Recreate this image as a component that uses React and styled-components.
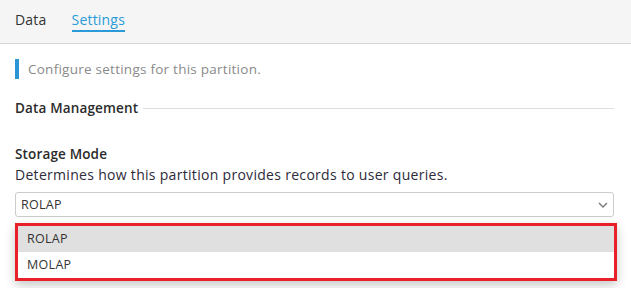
import React from 'react';
import styled, { createGlobalStyle } from 'styled-components';

const GlobalStyle = createGlobalStyle`
  html, body {
    margin: 0;
    padding: 0;
    background: #ffffff;
  }
  body {
    font-family: "Open Sans", "Liberation Sans", sans-serif;
    color: #222;
  }
`;

const Page = styled.div`
  width: 631px;
  height: 288px;
  overflow: hidden;
  background: #fff;
`;

const TabBar = styled.div`
  height: 43px;
  background: #f5f5f5;
  border-bottom: 1px solid #d6d6d6;
  display: flex;
  align-items: flex-start;
  gap: 25px;
  padding-left: 15px;
  box-sizing: content-box;
`;

const Tab = styled.div`
  font-size: 14px;
  letter-spacing: 0.2px;
  line-height: 18px;
  padding-top: 11px;
  padding-bottom: 1px;
  color: ${(p) => (p.active ? '#2a9bd8' : '#333')};
  border-bottom: 2px solid ${(p) => (p.active ? '#2a9bd8' : 'transparent')};
`;

const Content = styled.div`
  padding: 15px 17px 0 15px;
`;

const Note = styled.div`
  border-left: 4px solid #2a96d6;
  padding-left: 9px;
  height: 20px;
  line-height: 20px;
  font-size: 13.5px;
  letter-spacing: 0.25px;
  color: #8a8a8a;
`;

const SectionHeader = styled.div`
  display: flex;
  align-items: center;
  gap: 5px;
  margin-top: 20px;
  font-size: 13.5px;
  letter-spacing: 0.15px;
  font-weight: 600;
  color: #2b2b2b;
  line-height: 18px;

  &::after {
    content: '';
    flex: 1;
    height: 1px;
    background: #dedede;
  }
`;

const Field = styled.div`
  margin-top: 27px;
  position: relative;
`;

const FieldLabel = styled.div`
  font-size: 13.5px;
  letter-spacing: 0.15px;
  font-weight: 600;
  line-height: 20px;
  color: #2b2b2b;
`;

const FieldHelp = styled.div`
  font-size: 14px;
  letter-spacing: 0.3px;
  line-height: 20px;
  color: #2d2a3a;
  margin-top: 1px;
`;

const Select = styled.div`
  margin-top: 7px;
  height: 25px;
  box-sizing: border-box;
  border: 1px solid #cccccc;
  border-radius: 3px;
  display: flex;
  align-items: center;
  justify-content: space-between;
  padding: 0 4px 0 5px;
  font-size: 12.5px;
  letter-spacing: 0.3px;
  color: #333;
`;

const Chevron = styled.svg`
  width: 10px;
  height: 6px;
  margin-right: 1px;
`;

const Menu = styled.div`
  position: absolute;
  left: 0;
  right: -3px;
  top: 79px;
  border: 3px solid #e8202a;
  background: #fff;
  box-shadow: 0 4px 10px rgba(0, 0, 0, 0.22);
`;

const Option = styled.div`
  height: 26px;
  line-height: 26px;
  padding-left: 9px;
  font-size: 12.5px;
  letter-spacing: 0.3px;
  color: #333;
  background: ${(p) => (p.highlighted ? '#e0e0e0' : '#fff')};
`;

const modes = ['ROLAP', 'MOLAP'];

export default function App() {
  return (
    <>
      <GlobalStyle />
      <Page>
        <TabBar>
          <Tab>Data</Tab>
          <Tab active>Settings</Tab>
        </TabBar>
        <Content>
          <Note>Configure settings for this partition.</Note>
          <SectionHeader>Data Management</SectionHeader>
          <Field>
            <FieldLabel>Storage Mode</FieldLabel>
            <FieldHelp>Determines how this partition provides records to user queries.</FieldHelp>
            <Select>
              <span>ROLAP</span>
              <Chevron viewBox="0 0 10 6">
                <path d="M1 1l4 4 4-4" fill="none" stroke="#777" strokeWidth="1.3" />
              </Chevron>
            </Select>
            <Menu>
              {modes.map((m, i) => (
                <Option key={m} highlighted={i === 0}>
                  {m}
                </Option>
              ))}
            </Menu>
          </Field>
        </Content>
      </Page>
    </>
  );
}
